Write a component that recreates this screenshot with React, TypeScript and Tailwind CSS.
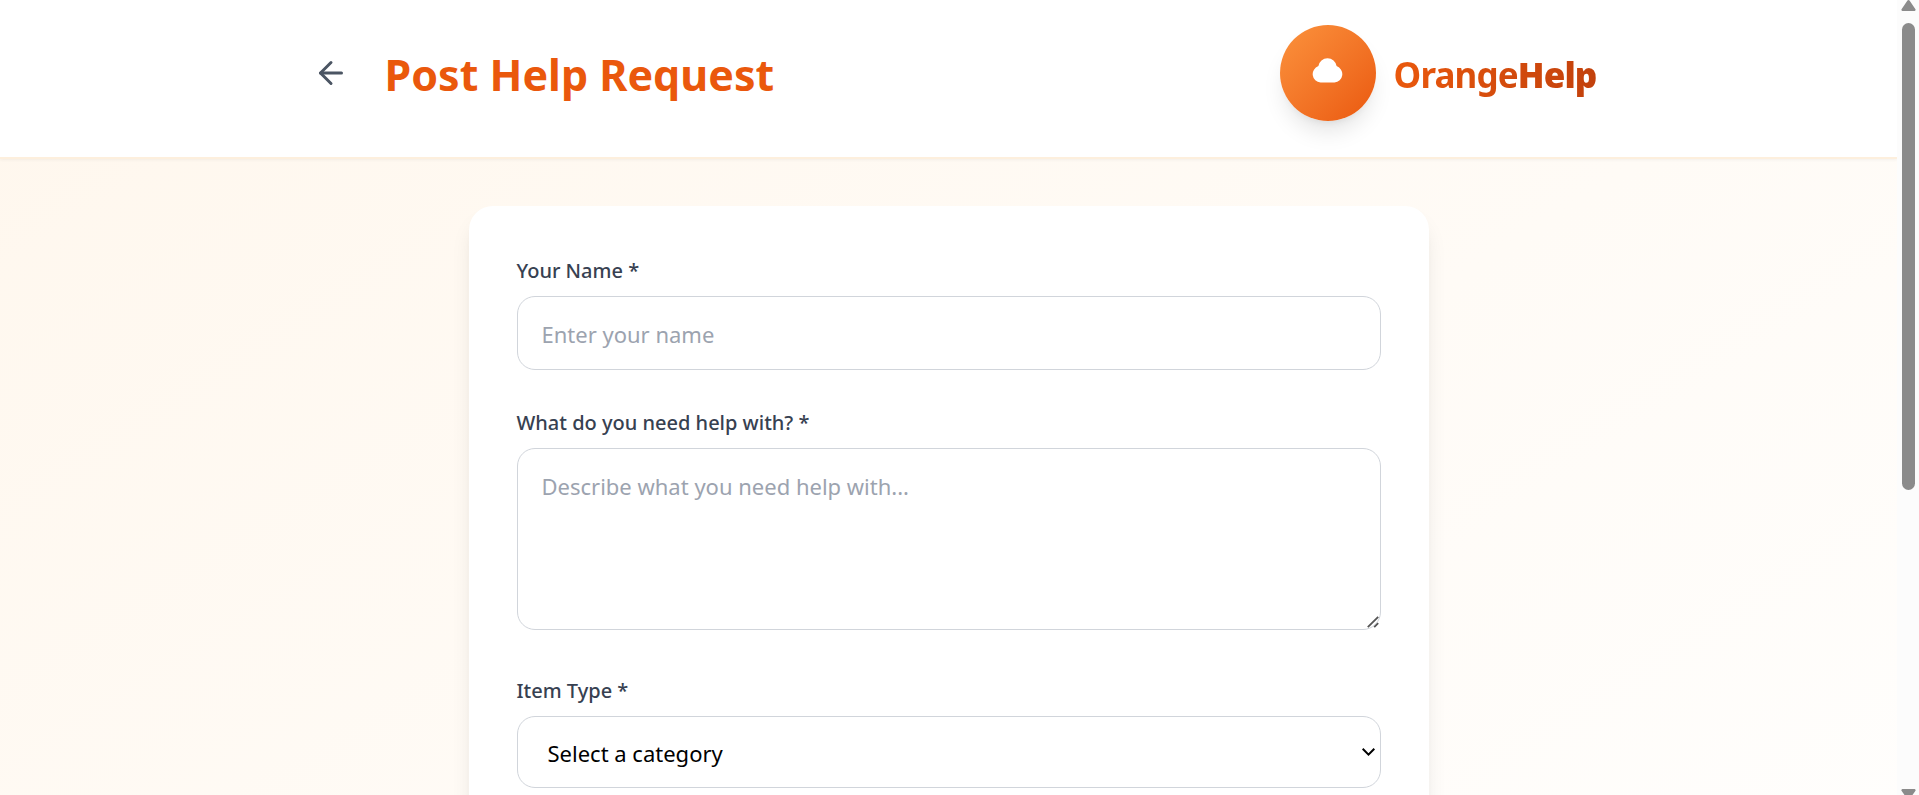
import { ArrowLeft } from 'lucide-react';

const fieldClass =
  'block w-full rounded-[18px] border border-[#d1d5db] bg-white text-[22px] text-black placeholder:text-[#9ca3af] focus:outline-none focus:ring-2 focus:ring-[#f97316]';

const labelClass = 'mb-3 block pt-1 text-[20px] leading-[26px] font-medium text-[#374151]';

const categories = ['Food', 'Clothing', 'Medicine', 'Furniture', 'Other'];

function Logo() {
  return (
    <div className="flex items-center gap-[18px]">
      <div className="flex size-24 items-center justify-center rounded-full bg-linear-to-br from-[#fb923c] to-[#ea580c] shadow-[0_15px_22px_-4px_rgba(0,0,0,0.1),0_6px_9px_-6px_rgba(0,0,0,0.1)]">
        <svg className="mb-1.5 h-[26px] w-[31px]" viewBox="0 0 31 26" fill="white" aria-hidden="true">
          <path d="M6.400 9.100A9.200 9.200 0 0 1 24.600 9.100A8.500 8.500 0 0 1 22.500 25.600H8.500A8.500 8.500 0 0 1 6.400 9.100Z" />
        </svg>
      </div>
      <span className="bg-linear-to-r from-[#ea580c] to-[#c2410c] bg-clip-text pt-1 text-[35px] leading-[48px] font-bold tracking-tight text-transparent">
        Orange<span className="font-black">Help</span>
      </span>
    </div>
  );
}

function Header() {
  return (
    <header className="border-b-2 border-[#fdefdd] bg-white pt-[25px] pb-9 shadow-[0_1px_3px_rgba(0,0,0,0.05)]">
      <div className="mx-auto flex max-w-[1344px] items-center justify-between px-6">
        <div className="flex items-center gap-6">
          <button type="button" aria-label="Back" className="rounded-full p-3 text-[#4b5563] hover:bg-[#fff7ed]">
            <ArrowLeft className="size-9" />
          </button>
          <h1 className="pt-1 text-[43px] leading-[54px] font-bold text-[#ea580c]">Post Help Request</h1>
        </div>
        <Logo />
      </div>
    </header>
  );
}

function HelpForm() {
  return (
    <form className="mx-auto w-full max-w-[960px] flex-1 rounded-3xl bg-white p-12 shadow-[0_15px_22px_-4px_rgba(0,0,0,0.1),0_6px_9px_-6px_rgba(0,0,0,0.1)]">
      <div className="mb-9">
        <label htmlFor="name" className={labelClass}>
          Your Name *
        </label>
        <input id="name" type="text" placeholder="Enter your name" className={`${fieldClass} h-[74px] px-6 pt-0.5`} />
      </div>

      <div className="mb-11">
        <label htmlFor="description" className={labelClass}>
          What do you need help with? *
        </label>
        <div className="relative">
          <textarea
            id="description"
            placeholder="Describe what you need help with..."
            className={`${fieldClass} h-[182px] resize-y px-6 py-[19px] leading-9 [&::-webkit-resizer]:bg-transparent`}
          />
          <svg
            className="pointer-events-none absolute right-0.5 bottom-0.5 size-3"
            viewBox="0 0 12 12"
            stroke="#555"
            strokeWidth="1.8"
            aria-hidden="true"
          >
            <path d="M.8 11.200 11.200 .8M7.200 11.200 11.200 7.200" />
          </svg>
        </div>
      </div>

      <div>
        <label htmlFor="category" className={labelClass}>
          Item Type *
        </label>
        <div className="relative">
          <select id="category" defaultValue="" className={`${fieldClass} h-[72px] appearance-none px-[30px] pt-0.5`}>
            <option value="">Select a category</option>
            {categories.map((category) => (
              <option key={category} value={category}>
                {category}
              </option>
            ))}
          </select>
          <svg
            className="pointer-events-none absolute top-8 right-1.5 h-2 w-[13px]"
            viewBox="0 0 13 8"
            fill="none"
            stroke="black"
            strokeWidth="2"
            aria-hidden="true"
          >
            <path d="M.7 .8 6.500 6.600 12.300 .8" />
          </svg>
        </div>
      </div>
    </form>
  );
}

function Scrollbar() {
  return (
    <div className="flex w-[22px] shrink-0 flex-col items-center bg-[#fcfcfc]" aria-hidden="true">
      <svg className="h-[11px] w-[15px]" viewBox="0 0 15 11" fill="#8b8b8b">
        <path d="M6.3 .8a1.4 1.4 0 0 1 2.4 0l5.6 8.2a1.2 1.2 0 0 1-1 2H1.700a1.200 1.200 0 0 1-1-2z" />
      </svg>
      <div className="mt-3 h-[467px] w-[13px] rounded-full bg-[#8b8b8b]" />
      <svg className="mt-auto h-1.5 w-[15px]" viewBox="0 0 15 6" fill="#8b8b8b">
        <path d="M1.700 0h11.600a1.200 1.200 0 0 1 1 2L11.500 6h-8L.7 2a1.200 1.200 0 0 1 1-2z" />
      </svg>
    </div>
  );
}

export default function App() {
  return (
    <div className="flex h-screen overflow-hidden font-['Noto_Sans','Open_Sans',sans-serif]">
      <div className="min-w-0 flex-1 overflow-hidden">
        <div className="flex min-h-[1200px] flex-col bg-linear-to-br from-[#fff7ed] to-white">
          <Header />
          <main className="flex flex-1 flex-col px-6 pt-[47px] pb-12">
            <HelpForm />
          </main>
        </div>
      </div>
      <Scrollbar />
    </div>
  );
}
